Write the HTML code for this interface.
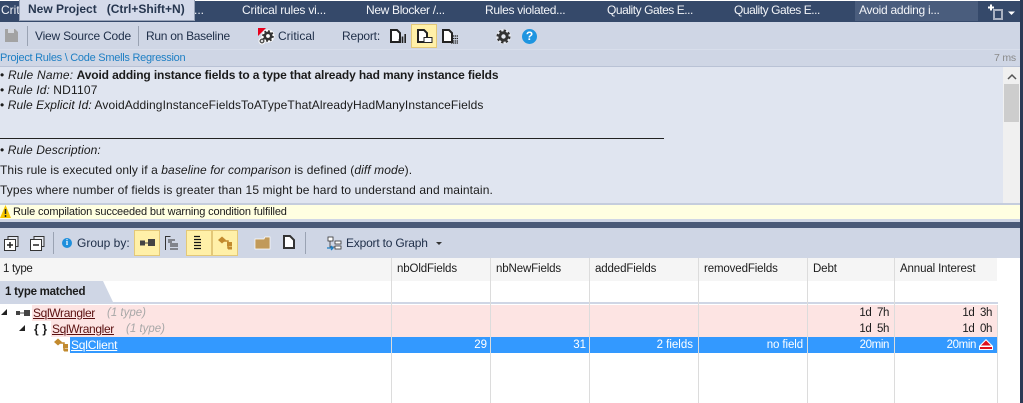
<!DOCTYPE html>
<html><head><meta charset="utf-8"><style>
html,body{margin:0;padding:0}
body{width:1023px;height:403px;position:relative;overflow:hidden;background:#fff;font:12px "Liberation Sans",Arial,sans-serif;color:#1b1b1b}
.a{position:absolute}
.t{position:absolute;white-space:nowrap;line-height:16px}
.tab{color:#f2f4f8;top:2px}
.tb{color:#20304a}
.hd{top:261px;color:#1c1c1c;font-size:11.500px;letter-spacing:-.13px}
.vl{position:absolute;width:1px;background:#dcdcdc;top:258px;height:145px}
.r{position:absolute;white-space:nowrap;line-height:16px;text-align:right;font-size:11.500px;letter-spacing:-.4px}
.w{color:#fff}
.lnk{color:#5a1010;text-decoration:underline;letter-spacing:-.35px}
.ty{color:#a8a8a8;font-style:italic;font-size:11.500px}
.b{letter-spacing:.1px}
svg{position:absolute;overflow:visible}
</style></head><body>
<div class="a" style="left:0;top:1px;width:1020px;height:21px;background:#35496a"></div>
<div class="a" style="left:855px;top:1px;width:123px;height:20px;background:#4a5d7d"></div>
<div class="a" style="left:1020px;top:0;width:3px;height:403px;background:#2c3a55"></div>
<span class="t tab" style="left:1px;top:2px">Crit</span>
<span class="t tab" style="left:194px">...</span>
<span class="t tab" style="left:242px;letter-spacing:-.2px">Critical rules vi...</span>
<span class="t tab" style="left:366px;letter-spacing:-.33px">New Blocker /...</span>
<span class="t tab" style="left:485px;letter-spacing:-.3px">Rules violated...</span>
<span class="t tab" style="left:607px;letter-spacing:-.45px">Quality Gates E...</span>
<span class="t tab" style="left:734px;letter-spacing:-.45px">Quality Gates E...</span>
<span class="t tab" style="left:859px;letter-spacing:-.27px">Avoid adding i...</span>
<div class="a" style="left:19px;top:0;width:174px;height:20px;background:#d4daea;border:1px solid #98a3b8;border-top:0"></div>
<span class="t" style="left:28px;top:1px;font-weight:bold;color:#26364f;letter-spacing:0">New Project &nbsp; (Ctrl+Shift+N)</span>
<svg style="left:987px;top:4px" width="30" height="16"><path d="M1 3.500h6M4 .500v6" stroke="#fff" stroke-width="2"/><rect x="7" y="6" width="8" height="9" fill="none" stroke="#aab2c2" stroke-width="2"/><path d="M21 7.500h7l-3.500 3.500z" fill="#fff"/></svg>

<div class="a" style="left:0;top:22px;width:1020px;height:44px;background:#cfd6e5"></div>
<div class="a" style="left:0;top:49px;width:1020px;height:1px;background:#d8deeb"></div>
<div class="a" style="left:0;top:66px;width:1020px;height:1px;background:#b9c2d5"></div>
<svg style="left:5px;top:29px" width="13" height="13"><path d="M0 0h10l3 3v10H0z" fill="#a3a3a3"/><rect x="3" y="0" width="6" height="4" fill="#d5d8de"/></svg>
<div class="a" style="left:27px;top:26px;width:1px;height:20px;background:#9aa3b3"></div>
<span class="t tb" style="left:35px;top:28px;letter-spacing:-.2px">View Source Code</span>
<div class="a" style="left:138px;top:26px;width:1px;height:20px;background:#9aa3b3"></div>
<span class="t tb" style="left:146px;top:28px;letter-spacing:-.28px">Run on Baseline</span>
<svg style="left:258px;top:28px" width="16" height="16"><circle cx="10" cy="8" r="6.500" fill="#fff"/><circle cx="4" cy="13" r="3.500" fill="#fff"/><path d="M0 0h8L0 8z" fill="#e8001c"/><circle cx="10" cy="8" r="3.200" fill="none" stroke="#333" stroke-width="2.600"/><circle cx="10" cy="8" r="5" fill="none" stroke="#333" stroke-width="1.600" stroke-dasharray="2 1.900"/><circle cx="4" cy="13" r="1.800" fill="none" stroke="#555" stroke-width="1.500"/></svg>
<span class="t tb" style="left:278px;top:28px;letter-spacing:0">Critical</span>
<span class="t tb" style="left:342px;top:28px;letter-spacing:-.2px">Report:</span>
<svg style="left:390px;top:29px" width="16" height="15"><path d="M1 1h6l3 3v9H1z" fill="#fff" stroke="#222" stroke-width="2"/><path d="M9.500 14v-4M12.500 14V7.500M15.200 14V5" stroke="#222" stroke-width="1.600"/></svg>
<div class="a" style="left:411px;top:24px;width:24px;height:22px;background:#fff0a8;border:1px solid #e3c878"></div>
<svg style="left:417px;top:29px" width="16" height="15"><path d="M1 1h6l3 3v9H1z" fill="#fff" stroke="#222" stroke-width="2"/><rect x="7" y="8.500" width="8" height="5" fill="#fff" stroke="#222"/></svg>
<svg style="left:442px;top:29px" width="16" height="15"><path d="M1 1h6l3 3v9H1z" fill="#fff" stroke="#222" stroke-width="2"/><path d="M9 7h7M9 9.500h7M9 12h7M9 14h7" stroke="#222" stroke-width="1.200" stroke-dasharray="1.300 .6"/></svg>
<svg style="left:496px;top:29px" width="15" height="15"><circle cx="7.500" cy="7.500" r="7.500" fill="#e6e9f0"/><circle cx="7.500" cy="7.500" r="3.700" fill="none" stroke="#333" stroke-width="3"/><circle cx="7.500" cy="7.500" r="6" fill="none" stroke="#333" stroke-width="2" stroke-dasharray="2.400 2.300"/></svg>
<div class="a" style="left:522px;top:29px;width:15px;height:15px;border-radius:50%;background:#1e95e0;color:#fff;font-weight:bold;font-size:12px;line-height:15px;text-align:center">?</div>
<span class="t" style="left:0;top:50px;color:#1e7fc4;font-size:11px;letter-spacing:-.27px">Project Rules \ Code Smells Regression</span>
<span class="t" style="left:994px;top:50px;color:#8a8a8a;font-size:10.500px;letter-spacing:-.2px">7 ms</span>

<div class="a" style="left:0;top:67px;width:1020px;height:136px;background:#e0e5f0"></div>
<div class="a" style="left:1003px;top:67px;width:17px;height:136px;background:#f0f0f0"></div>
<div class="a" style="left:1004px;top:84px;width:15px;height:38px;background:#cdcdcd"></div>
<svg style="left:1007px;top:74px" width="10" height="6"><path d="M1 5l4-4 4 4" fill="none" stroke="#555" stroke-width="1.500"/></svg>
<div class="t" style="left:0;top:67px"><span style="letter-spacing:.2px">• <i>Rule Name:</i></span> <b style="letter-spacing:-.13px">Avoid adding instance fields to a type that already had many instance fields</b></div>
<div class="t" style="left:0;top:82px"><span style="letter-spacing:.1px">• <i>Rule Id:</i></span> <span style="letter-spacing:.2px">ND1107</span></div>
<div class="t" style="left:0;top:97px;letter-spacing:.08px">• <i>Rule Explicit Id:</i> AvoidAddingInstanceFieldsToATypeThatAlreadyHadManyInstanceFields</div>
<div class="a" style="left:0;top:138px;width:664px;height:1px;background:#222"></div>
<div class="t b" style="left:0;top:142px">• <i>Rule Description:</i></div>
<div class="t b" style="left:0;top:162px">This rule is executed only if a <i>baseline for comparison</i> is defined (<i>diff mode</i>).</div>
<div class="t" style="left:0;top:182px;letter-spacing:.12px">Types where number of fields is greater than 15 might be hard to understand and maintain.</div>

<div class="a" style="left:0;top:203px;width:1020px;height:2px;background:#c5cddd"></div>
<div class="a" style="left:0;top:205px;width:1020px;height:14px;background:#ffffe1"></div>
<div class="a" style="left:0;top:219px;width:1020px;height:3px;background:#cfd6e5"></div>
<svg style="left:0;top:204px" width="12" height="15"><path d="M5.500 1L11 14H0z" fill="#f7c600"/><path d="M5.500 5v5M5.500 11v2" stroke="#222" stroke-width="1.500"/></svg>
<span class="t" style="left:13px;top:204px;font-size:11px;letter-spacing:-.14px">Rule compilation succeeded but warning condition fulfilled</span>
<div class="a" style="left:0;top:222px;width:1020px;height:6px;background:#4a5a78"></div>

<div class="a" style="left:0;top:228px;width:1020px;height:30px;background:#cfd6e5"></div>
<svg style="left:4px;top:236px" width="15" height="15"><rect x="4" y="0.500" width="10" height="10" fill="#e6e9f0" stroke="#333"/><rect x="0.500" y="3.500" width="11" height="11" fill="#fff" stroke="#333"/><path d="M3 9h6M6 6v6" stroke="#222" stroke-width="1.500"/></svg>
<svg style="left:30px;top:236px" width="15" height="15"><rect x="4" y="0.500" width="10" height="10" fill="#e6e9f0" stroke="#333"/><rect x="0.500" y="3.500" width="11" height="11" fill="#fff" stroke="#333"/><path d="M3 9h6" stroke="#222" stroke-width="1.500"/></svg>
<div class="a" style="left:53px;top:232px;width:1px;height:22px;background:#9aa3b3"></div>
<div class="a" style="left:62px;top:238px;width:10px;height:10px;border-radius:50%;background:#1e8fdc;color:#fff;font:bold 8px/10px 'Liberation Serif',serif;text-align:center">i</div>
<span class="t tb" style="left:77px;top:235px">Group by:</span>
<div class="a" style="left:134px;top:230px;width:24px;height:24px;background:#fff0a8;border:1px solid #e3c878"></div>
<svg style="left:140px;top:239px" width="15" height="8"><rect x="0" y="1.500" width="5" height="5" fill="#444"/><path d="M5 4h3" stroke="#444"/><rect x="8" y="0" width="7" height="7" fill="#444"/></svg>
<svg style="left:165px;top:236px" width="14" height="15"><path d="M.5 0v14M.5.500h5M3 4h7M3 6h4M5 8h8M5 10h8M5 13h8" stroke="#333" fill="none"/></svg>
<div class="a" style="left:186px;top:230px;width:24px;height:24px;background:#fff0a8;border:1px solid #e3c878"></div>
<svg style="left:193px;top:236px" width="12" height="15"><path d="M1 .500h6M1 3.500h7M1 6.500h7M1 9.500h7M1 12.500h7" stroke="#111" stroke-width="1.200"/></svg>
<div class="a" style="left:212px;top:230px;width:24px;height:24px;background:#fff0a8;border:1px solid #e3c878"></div>
<svg style="left:218px;top:236px" width="15" height="14"><path d="M0 4l4-3.500 4 3.500-4 3.500zM9 6h5v4H9zM10 10.500h4v3h-4z" fill="#c28a2e"/><path d="M6 5h4v7h1" stroke="#c28a2e" stroke-width="1.500" fill="none"/></svg>
<svg style="left:255px;top:237px" width="15" height="12"><path d="M0 2h9l1-2h5v12H0z" fill="#c19a5a" stroke="#fff" stroke-width=".7"/></svg>
<svg style="left:283px;top:235px" width="12" height="14"><path d="M1 1h6l4 4v8H1z" fill="#fff" stroke="#333" stroke-width="2"/></svg>
<div class="a" style="left:305px;top:232px;width:1px;height:22px;background:#9aa3b3"></div>
<svg style="left:327px;top:236px" width="15" height="14"><rect x="1" y="1" width="5" height="4" fill="#fff" stroke="#333" stroke-width=".8"/><rect x="8" y="5" width="6" height="3" fill="#fff" stroke="#333" stroke-width=".8"/><rect x="8" y="10" width="6" height="3" fill="#fff" stroke="#333" stroke-width=".8"/><path d="M3 5v6h5" fill="none" stroke="#333" stroke-width=".8"/><path d="M0 12h6M4 10l2 2-2 2" fill="none" stroke="#1e7fc4" stroke-width="1.300"/></svg>
<span class="t tb" style="left:346px;top:235px;letter-spacing:-.2px">Export to Graph</span>
<svg style="left:435px;top:242px" width="8" height="4"><path d="M1 0h6L4 3z" fill="#333"/></svg>

<div class="a" style="left:0;top:258px;width:997px;height:23px;background:#f5f5f5"></div>
<span class="t hd" style="left:3px;letter-spacing:-.3px">1 type</span>
<span class="t hd" style="left:397px">nbOldFields</span>
<span class="t hd" style="left:496px">nbNewFields</span>
<span class="t hd" style="left:595px">addedFields</span>
<span class="t hd" style="left:704px">removedFields</span>
<span class="t hd" style="left:813px">Debt</span>
<span class="t hd" style="left:900px">Annual Interest</span>

<svg style="left:0;top:281px" width="120" height="22"><path d="M0 0H103L113 21H0z" fill="#cfd6e5"/></svg>
<span class="t" style="left:5px;top:284px;font-weight:bold;font-size:11.500px;letter-spacing:-.25px">1 type matched</span>
<div class="a" style="left:0;top:302px;width:998px;height:2px;background:#cfd6e5"></div>

<div class="a" style="left:32px;top:305px;width:966px;height:16px;background:#fde4e3"></div>
<div class="a" style="left:51px;top:321px;width:947px;height:16px;background:#fde4e3"></div>
<div class="a" style="left:70px;top:337px;width:928px;height:16px;background:#3399ff"></div>
<div class="vl" style="left:391px"></div>
<div class="vl" style="left:490px"></div>
<div class="vl" style="left:589px"></div>
<div class="vl" style="left:698px"></div>
<div class="vl" style="left:807px"></div>
<div class="vl" style="left:894px"></div>
<div class="vl" style="left:997px;top:305px;height:98px"></div>

<svg style="left:1px;top:309px" width="6" height="6"><path d="M6 0v6H0z" fill="#222"/></svg>
<svg style="left:16px;top:310px" width="14" height="7"><rect x="0" y="1" width="4" height="4" fill="#444"/><path d="M4 3h4" stroke="#444"/><rect x="8" y="0" width="6" height="6" fill="#444"/></svg>
<span class="t lnk" style="left:33px;top:305px">SqlWrangler</span>
<span class="t ty" style="left:107px;top:305px">(1 type)</span>
<svg style="left:19px;top:325px" width="6" height="6"><path d="M6 0v6H0z" fill="#222"/></svg>
<span class="t" style="left:34px;top:321px;font-weight:bold;font-size:12px;letter-spacing:.2px">{ }</span>
<span class="t lnk" style="left:52px;top:321px">SqlWrangler</span>
<span class="t ty" style="left:126px;top:321px">(1 type)</span>
<svg style="left:54px;top:338px" width="15" height="14"><path d="M0 4l4-3.500 4 3.500-4 3.500zM9 6h5v4H9zM10 10.500h4v3h-4z" fill="#c28a2e"/><path d="M6 5h4v7h1" stroke="#c28a2e" stroke-width="1.500" fill="none"/></svg>
<span class="t w" style="left:71px;top:337px;text-decoration:underline;letter-spacing:-.2px">SqlClient</span>

<span class="r w" style="right:536px;top:337px;letter-spacing:0">29</span>
<span class="r w" style="right:437px;top:337px;letter-spacing:0">31</span>
<span class="r w" style="right:330px;top:337px;letter-spacing:0">2 fields</span>
<span class="r w" style="right:220px;top:337px;letter-spacing:-.1px">no field</span>
<span class="r" style="right:134px;top:305px">1d &nbsp;7h</span>
<span class="r" style="right:134px;top:321px">1d &nbsp;5h</span>
<span class="r w" style="right:134px;top:337px">20min</span>
<span class="r" style="right:31px;top:305px">1d &nbsp;3h</span>
<span class="r" style="right:31px;top:321px">1d &nbsp;0h</span>
<span class="r w" style="right:47px;top:337px">20min</span>
<svg style="left:979px;top:339px" width="15" height="12"><path d="M0 11V7L7 0l7 7v4z" fill="#fff"/><path d="M2 6.500L7 1.500l5 5zM1 8h12v2H1z" fill="#e0101c"/></svg>
</body></html>
